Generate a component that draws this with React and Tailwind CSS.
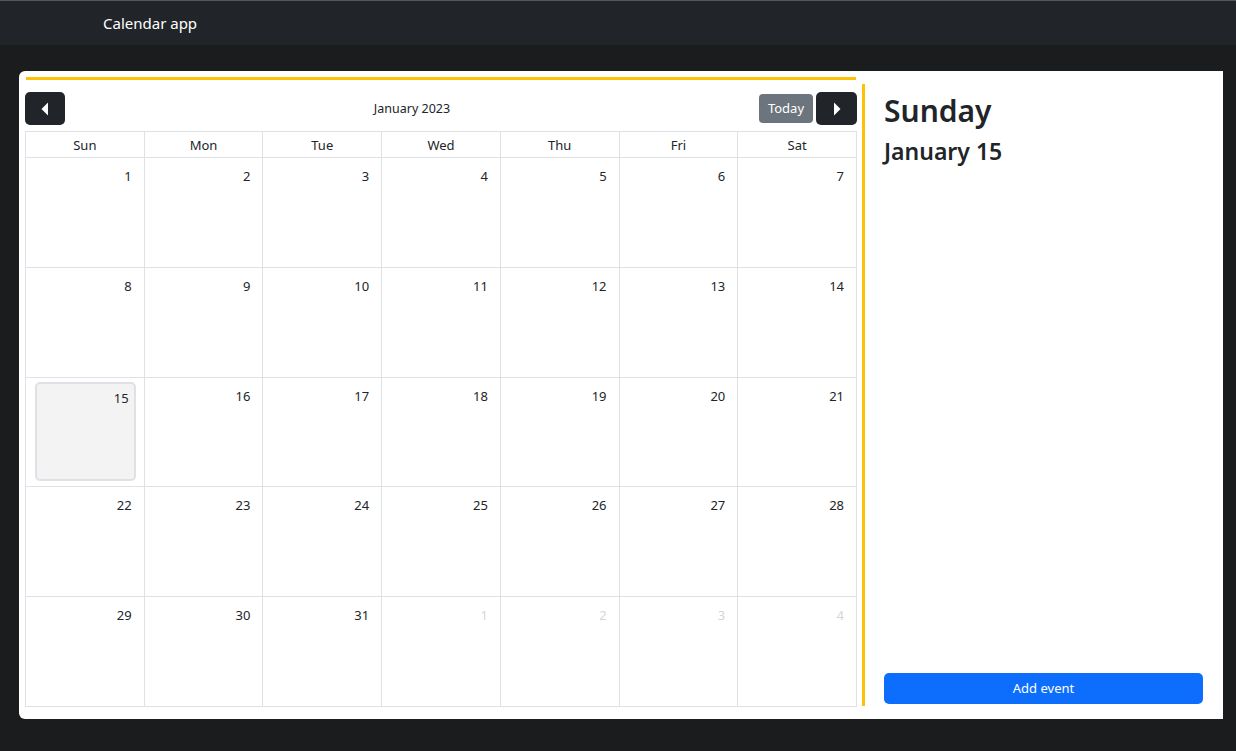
import React from 'react';

const FONT = { fontFamily: '"Noto Sans", "Open Sans", sans-serif' };
const DAYS = ['Sun', 'Mon', 'Tue', 'Wed', 'Thu', 'Fri', 'Sat'];

// January 2023 starts on a Sunday; pad with February days to fill 5 weeks
const CELLS = [
  ...Array.from({ length: 31 }, (_, i) => ({ day: i + 1, current: true })),
  ...Array.from({ length: 4 }, (_, i) => ({ day: i + 1, current: false })),
];

function Caret({ dir }) {
  return (
    <svg width="8" height="14" viewBox="0 0 8 14" fill="currentColor">
      {dir === 'left' ? <path d="M7 0.5v13L0.5 7z" /> : <path d="M1 0.5v13L7.5 7z" />}
    </svg>
  );
}

function DayCell({ cell, selected }) {
  if (selected) {
    return (
      <div className="border-r border-b border-[#dee2e6] pt-[4px] pb-[5px] pl-[9px] pr-[8px]">
        <div className="h-full rounded-[5px] border-2 border-[#dee2e6] bg-[#f3f3f3] pt-[5px] pr-[5px] text-right text-[13px] leading-[18px] text-[#212529]">
          {cell.day}
        </div>
      </div>
    );
  }
  return (
    <div
      className={`border-r border-b border-[#dee2e6] pt-[9px] pr-[12px] text-right text-[13px] leading-[18px] ${
        cell.current ? 'text-[#212529]' : 'text-[#d3d6d9]'
      }`}
    >
      {cell.day}
    </div>
  );
}

function Calendar() {
  return (
    <div className="flex w-[832px] flex-col">
      <div className="mx-[1px] h-[3px] bg-[#ffc107]" />
      <div className="mt-[12px] flex items-center">
        <button className="flex h-[33px] w-[40px] items-center justify-center rounded-[5px] bg-[#212529] text-white">
          <Caret dir="left" />
        </button>
        <div className="flex-1 pt-[2px] text-center text-[12.5px] text-[#212529]">January 2023</div>
        <button className="h-[29px] w-[54px] rounded-[4px] bg-[#6c757d] pt-[1px] text-[13px] text-white">Today</button>
        <button className="ml-[3px] flex h-[33px] w-[41px] items-center justify-center rounded-[5px] bg-[#212529] text-white">
          <Caret dir="right" />
        </button>
      </div>
      <div className="mt-[6px] grid h-[576px] grid-cols-7 grid-rows-[26px_repeat(5,1fr)] border-t border-l border-[#dee2e6]">
        {DAYS.map((d) => (
          <div
            key={d}
            className="flex items-center justify-center border-r border-b border-[#dee2e6] pt-[2px] text-[13px] text-[#212529]"
          >
            {d}
          </div>
        ))}
        {CELLS.map((c, i) => (
          <DayCell key={i} cell={c} selected={c.current && c.day === 15} />
        ))}
      </div>
    </div>
  );
}

export default function App() {
  return (
    <div className="min-h-screen bg-[#1b1c1e]" style={FONT}>
      <nav className="flex h-[45px] items-center border-t border-[#55585c] bg-[#212529] pt-[1px] pl-[103px] text-[15px] text-white">
        Calendar app
      </nav>
      <main className="pt-[26px] pl-[19px] pr-[13px]">
        <div className="flex h-[648px] rounded-l-[6px] bg-white pt-[6px] pl-[6px]">
          <Calendar />
          <div className="mt-[7px] mb-[13px] ml-[5px] flex flex-1 flex-col border-l-[3px] border-[#ffc107] pl-[19px] pr-[20px]">
            <h2 className="mt-[9px] text-[30px] leading-[36px] font-semibold text-[#212529]">Sunday</h2>
            <h4 className="mt-[8px] text-[23px] leading-[28px] font-semibold text-[#212529]">January 15</h4>
            <div className="flex-1" />
            <button className="mb-[2px] h-[31px] rounded-[5px] bg-[#0d6efd] pt-[1px] text-[13px] text-white">Add event</button>
          </div>
        </div>
      </main>
    </div>
  );
}
